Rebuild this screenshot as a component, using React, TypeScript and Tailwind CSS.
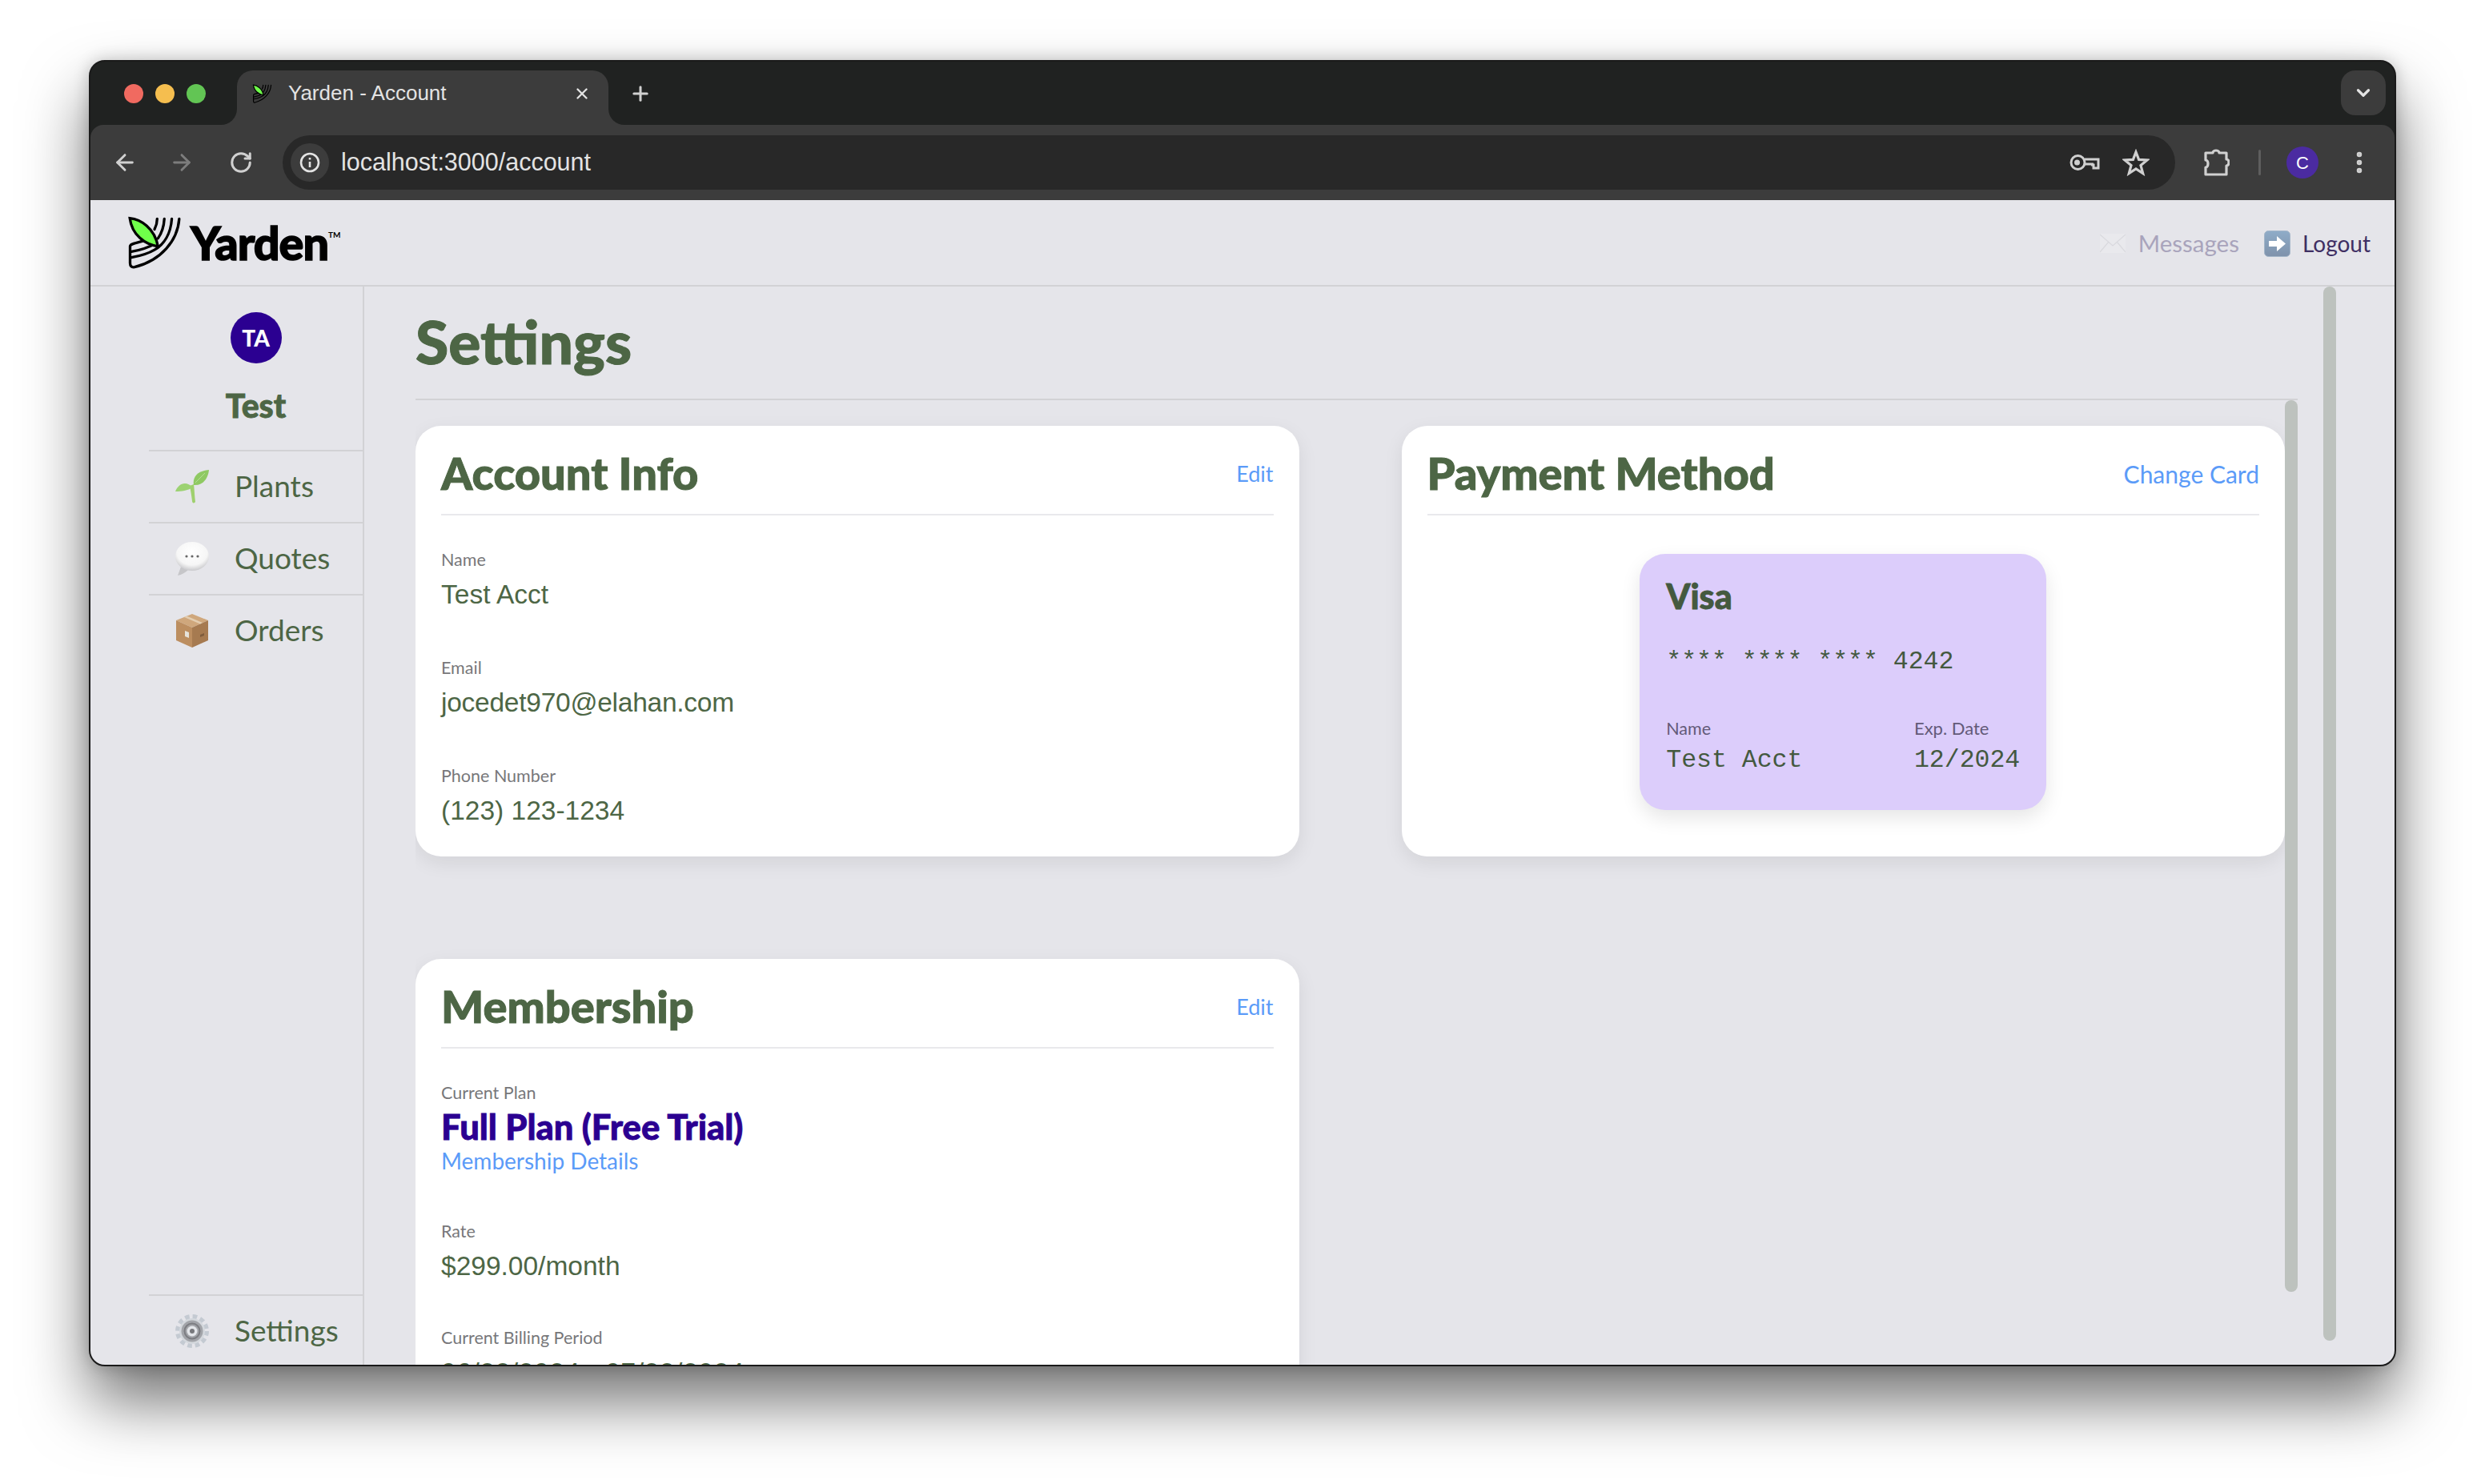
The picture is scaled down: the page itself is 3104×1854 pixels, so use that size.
import { ArrowLeft, ArrowRight, ChevronDown, EllipsisVertical, Plus, RotateCw, X } from 'lucide-react';

const YardenMark = ({ width, height }: { width: number; height: number }) => (
  <svg width={width} height={height} viewBox="20 25 210 205" fill="none" stroke="#000" strokeWidth={10} strokeLinecap="round">
    <path d="M218 38C212 120 150 195 50 220C38 222 33 216 33 205L33 142C33 130 60 130 100 116" />
    <path d="M190 38C186 95 160 135 125 155C100 170 70 178 38 184" />
    <path d="M162 38C160 70 150 95 138 112" />
    <path d="M135 38C135 52 131 66 125 78" />
    <path d="M38 162C70 156 100 148 130 130" />
    <path d="M32 36C72 40 125 72 138 142C90 135 40 100 32 36Z" fill="#6fff4a" />
  </svg>
);

const Sprout = () => (
  <svg width="44" height="42" viewBox="0 0 44 42">
    <path d="M24 18C25 26 25 33 26 40C25 42 22 42 22 39C21 31 20 25 19 20Z" fill="#9fd06e" />
    <path d="M1 27C5 17 14 13 23 22C16 26 9 27 1 27Z" fill="#9cd272" />
    <path d="M24 19C22 8 30 1 43 0C42 11 35 20 24 19Z" fill="#8fc963" />
    <path d="M26 16L38 4" stroke="#b5de96" strokeWidth="1" />
  </svg>
);

const Bubble = () => (
  <svg width="44" height="44" viewBox="0 0 44 44">
    <defs>
      <radialGradient id="bubbleFill" cx="50%" cy="35%" r="65%">
        <stop offset="0%" stopColor="#ffffff" />
        <stop offset="70%" stopColor="#f6f6f6" />
        <stop offset="100%" stopColor="#c9c9cc" />
      </radialGradient>
    </defs>
    <path d="M8 32L4 43C9 42 14 39 17 36Z" fill="#c6c6c9" />
    <ellipse cx="22" cy="19" rx="21" ry="18" fill="url(#bubbleFill)" />
    <circle cx="15" cy="19" r="1.6" fill="#666" />
    <circle cx="22" cy="19" r="1.6" fill="#666" />
    <circle cx="29" cy="19" r="1.6" fill="#666" />
  </svg>
);

const BoxIcon = () => (
  <svg width="42" height="44" viewBox="0 0 42 44">
    <path d="M21 1L41 9L21 18L1 9Z" fill="#cfa77c" />
    <path d="M1 9L21 18V43L1 34Z" fill="#bc8e60" />
    <path d="M41 9L21 18V43L41 34Z" fill="#a67a50" />
    <path d="M11 5L31 13.5L34 12L14 3.5Z" fill="#e3cdb0" />
    <path d="M12 22L17 24V31L12 29Z" fill="#e6e2da" />
    <path d="M31 27L36 25V28L31 30Z" fill="#7f5c3c" />
  </svg>
);

const GearIcon = () => (
  <svg width="42" height="42" viewBox="0 0 42 42">
    <circle cx="21" cy="21" r="18" fill="none" stroke="#c4cad2" strokeWidth="6" strokeDasharray="5.5 3.93" />
    <circle cx="21" cy="21" r="16" fill="#d4d8dd" />
    <circle cx="21" cy="21" r="13.5" fill="#a2a4a9" />
    <circle cx="21" cy="21" r="9.5" fill="none" stroke="#7c7d82" strokeWidth="2" />
    <circle cx="21" cy="21" r="6.5" fill="#e4e6ea" />
    <circle cx="21" cy="21" r="3" fill="#77787c" />
  </svg>
);

const Envelope = () => (
  <svg width="32" height="24" viewBox="0 0 32 24" fill="none">
    <rect x="0" y="0" width="32" height="24" fill="#e9e9ed" />
    <path d="M0 1L16 15L32 1M0 23L11 10M32 23L21 10" stroke="#d9d9de" strokeWidth="1.2" />
  </svg>
);

const ArrowBox = () => (
  <svg width="33" height="33" viewBox="0 0 33 33">
    <defs>
      <linearGradient id="arrowFill" x1="0" y1="0" x2="0" y2="1">
        <stop offset="0%" stopColor="#8facc8" />
        <stop offset="100%" stopColor="#7f92ab" />
      </linearGradient>
    </defs>
    <rect x="0.5" y="0.5" width="32" height="32" rx="5" fill="url(#arrowFill)" stroke="#a4b6c9" />
    <path d="M6 13H16V7L27 16.5L16 26V20H6Z" fill="#fff" />
  </svg>
);

const KeyIcon = () => (
  <svg width="38" height="22" viewBox="0 0 38 22" fill="none" stroke="#d0d0d0" strokeWidth="3">
    <circle cx="10.5" cy="11" r="8.5" />
    <circle cx="9.5" cy="11" r="3.5" fill="#d0d0d0" stroke="none" />
    <path d="M19 7H36V18H30V14H27V14M30 13H19" />
  </svg>
);

const StarIcon = () => (
  <svg width="34" height="34" viewBox="0 0 34 34" fill="none" stroke="#d0d0d0" strokeWidth="3.2" strokeLinejoin="miter">
    <path d="M17 4L20.6 13.4L31 14L23 20.6L25.7 30.6L17 25L8.3 30.6L11 20.6L3 14L13.4 13.4Z" />
  </svg>
);

const PuzzleIcon = () => (
  <svg width="32" height="34" viewBox="0 0 32 34" fill="none" stroke="#d0d0d0" strokeWidth="3.2" strokeLinejoin="round">
    <path d="M2 5H11C11 1 19 1 19 5H28V13C32 13 32 21 28 21V32H2V23C6 23 6 14 2 14Z" />
  </svg>
);

const InfoIcon = () => (
  <svg width="26" height="26" viewBox="0 0 26 26" fill="none" stroke="#e3e3e3" strokeWidth="2.6">
    <circle cx="13" cy="13" r="11" />
    <path d="M13 12V19M13 7V9.6" />
  </svg>
);

const Field = ({ label, value, className, valueClass }: { label: string; value: string; className?: string; valueClass?: string }) => (
  <div className={className}>
    <div className="h-[28px] text-[21.5px] leading-[26px] text-[#77777a]">{label}</div>
    <div className={`mt-[9px] h-[40px] font-['Liberation_Sans',sans-serif] text-[33.5px] leading-[40px] text-[#4d6645] ${valueClass ?? ''}`}>{value}</div>
  </div>
);

const CardHeader = ({ title, action, actionClass }: { title: string; action: string; actionClass: string }) => (
  <div className="flex items-center justify-between border-b-2 border-[#e9e9ec] pt-[27px] pb-[19px]">
    <h2 className="text-[56px] leading-[64px] font-black text-[#4d6645] [-webkit-text-stroke:1px_currentColor]">{title}</h2>
    <a className={`pt-[2px] text-[#5b9bf8] ${actionClass}`}>{action}</a>
  </div>
);

const NavRow = ({ icon, label }: { icon: React.ReactNode; label: string }) => (
  <div className="flex h-[90px] items-center border-t-2 border-[#d2d2d5] pl-[31px]">
    <div className="flex w-[46px] justify-center">{icon}</div>
    <span className="ml-[30px] pb-[2px] text-[37px] text-[#4d6645]">{label}</span>
  </div>
);

export default function App() {
  return (
    <div className="h-[1854px] w-[3104px] overflow-hidden bg-white pt-[75px] pl-[111px] font-['Lato',sans-serif]">
      <div className="flex h-[1632px] w-[2882px] flex-col overflow-hidden rounded-[20px] border-2 border-[#1a1a1a] bg-[#202221] shadow-[0_44px_80px_rgba(0,0,0,0.55),0_0_20px_rgba(0,0,0,0.2)]">
        {/* tab strip */}
        <div className="flex h-[79px] shrink-0 items-end">
          <div className="flex h-[68px] w-[183px] items-start gap-[15px] pt-[17px] pl-[42px]">
            <span className="h-[24px] w-[24px] rounded-full bg-[#f06a60]" />
            <span className="h-[24px] w-[24px] rounded-full bg-[#f5be4f]" />
            <span className="h-[24px] w-[24px] rounded-full bg-[#62c554]" />
          </div>
          <div className="relative flex h-[68px] w-[464px] items-start rounded-t-[20px] bg-[#3c3c3c] pt-[16px] pl-[19px]">
            <span className="absolute bottom-0 -left-[20px] h-[20px] w-[20px] bg-[#3c3c3c]">
              <span className="block h-full w-full rounded-br-[20px] bg-[#202221]" />
            </span>
            <span className="absolute -right-[20px] bottom-0 h-[20px] w-[20px] bg-[#3c3c3c]">
              <span className="block h-full w-full rounded-bl-[20px] bg-[#202221]" />
            </span>
            <YardenMark width={25} height={26} />
            <span className="ml-[20px] -mt-[2px] font-['Liberation_Sans',sans-serif] text-[26px] leading-[28px] text-[#e3e3e3]">Yarden - Account</span>
            <X className="absolute top-[18px] right-[22px] text-[#e3e3e3]" size={22} strokeWidth={2.6} />
          </div>
          <div className="flex h-[68px] flex-1 items-start pl-[26px]">
            <Plus className="mt-[15px] text-[#d0d0d0]" size={28} strokeWidth={2.6} />
            <div className="mr-[11px] ml-auto flex h-[56px] w-[56px] items-center justify-center rounded-[18px] bg-[#3c3c3c]">
              <ChevronDown className="text-[#e3e3e3]" size={26} strokeWidth={3} />
            </div>
          </div>
        </div>
        {/* toolbar */}
        <div className="flex h-[94px] shrink-0 items-center rounded-t-[16px] bg-[#3c3c3c] pl-[27px]">
          <ArrowLeft className="text-[#d0d0d0]" size={32} strokeWidth={2.2} />
          <ArrowRight className="ml-[39px] text-[#7d7d7d]" size={32} strokeWidth={2.2} />
          <RotateCw className="ml-[43px] text-[#d0d0d0]" size={30} strokeWidth={2.4} />
          <div className="ml-[37px] flex h-[68px] w-[2364px] items-center rounded-full bg-[#282828] pl-[10px]">
            <div className="flex h-[48px] w-[48px] items-center justify-center rounded-full bg-[#3c3c3c]">
              <InfoIcon />
            </div>
            <span className="ml-[15px] font-['Liberation_Sans',sans-serif] text-[30.5px] text-[#e3e3e3]">localhost:3000/account</span>
            <div className="mr-[32px] ml-auto flex items-center gap-[28px]">
              <KeyIcon />
              <StarIcon />
            </div>
          </div>
          <div className="ml-[36px]">
            <PuzzleIcon />
          </div>
          <span className="ml-[36px] h-[32px] w-[3px] rounded-full bg-[#5e5e5e]" />
          <span className="ml-[32px] flex h-[40px] w-[40px] items-center justify-center rounded-full bg-[#4b2ba1] font-['Liberation_Sans',sans-serif] text-[22px] text-white">C</span>
          <EllipsisVertical className="ml-[34px] text-[#d0d0d0]" size={34} strokeWidth={2.6} />
        </div>
        {/* page */}
        <div className="flex min-h-0 flex-1 flex-col bg-[#e5e5ea]">
          <header className="flex h-[108px] shrink-0 items-center justify-between border-b-2 border-[#d2d2d5] pr-[30px] pl-[45px]">
            <div className="flex items-center">
              <YardenMark width={70} height={68} />
              <span className="ml-[10px] text-[57.5px] leading-[68px] font-black tracking-[-1px] text-black [-webkit-text-stroke:1.5px_currentColor]">Yarden</span>
              <span className="-mt-[20px] text-[10px] font-bold text-black">TM</span>
            </div>
            <div className="flex items-center pt-[2px]">
              <Envelope />
              <span className="ml-[16px] text-[29.5px] text-[#a9a4bc]">Messages</span>
              <span className="ml-[31px]">
                <ArrowBox />
              </span>
              <span className="ml-[15px] text-[28px] text-[#3f2f63]">Logout</span>
            </div>
          </header>
          <div className="flex min-h-0 flex-1">
            <aside className="flex w-[342px] shrink-0 flex-col border-r-2 border-[#d2d2d5] pl-[73px]">
              <div className="flex flex-col items-center pt-[32px] pb-[31px]">
                <div className="flex h-[64px] w-[64px] items-center justify-center rounded-full bg-[#2b0091] text-[28px] font-black text-white">TA</div>
                <div className="mt-[29px] text-[41px] leading-[48px] font-black text-[#4d6645] [-webkit-text-stroke:0.8px_currentColor]">Test</div>
              </div>
              <NavRow icon={<Sprout />} label="Plants" />
              <NavRow icon={<Bubble />} label="Quotes" />
              <NavRow icon={<BoxIcon />} label="Orders" />
              <div className="mt-auto -mb-[2px]">
                <NavRow icon={<GearIcon />} label="Settings" />
              </div>
            </aside>
            <main className="flex min-w-0 flex-1 pr-[73px]">
              <div className="flex min-w-0 flex-1 flex-col pr-[32px] pl-[64px]">
                <div className="shrink-0 border-b-2 border-[#d2d2d5] pt-[28px] pb-[32px]">
                  <h1 className="text-[75px] leading-[80px] font-black text-[#4d6645] [-webkit-text-stroke:1px_currentColor]">Settings</h1>
                </div>
                <div className="flex min-h-0 flex-1">
                  <div className="min-w-0 flex-1 overflow-hidden pt-[32px]">
                    <div className="grid grid-cols-2 gap-[128px]">
                      <section className="rounded-[32px] bg-white px-[32px] pb-[37px] shadow-[0_8px_24px_rgba(0,0,0,0.08)]">
                        <CardHeader title="Account Info" action="Edit" actionClass="text-[27px]" />
                        <Field className="mt-[42px]" label="Name" value="Test Acct" />
                        <Field className="mt-[58px]" label="Email" value="jocedet970@elahan.com" valueClass="tracking-[-0.25px]" />
                        <Field className="mt-[58px]" label="Phone Number" value="(123) 123-1234" />
                      </section>
                      <section className="rounded-[32px] bg-white px-[32px] shadow-[0_8px_24px_rgba(0,0,0,0.08)]">
                        <CardHeader title="Payment Method" action="Change Card" actionClass="text-[30px]" />
                        <div className="mx-auto mt-[48px] h-[320px] w-[508px] rounded-[32px] bg-[#dccdfb] px-[33px] pt-[27px] shadow-[0_10px_24px_rgba(0,0,0,0.1)]">
                          <div className="text-[43px] leading-[52px] font-black text-[#44593f] [-webkit-text-stroke:0.8px_currentColor]">Visa</div>
                          <div className="mt-[36px] font-['Liberation_Mono',monospace] text-[31.5px] leading-[40px] text-[#44593f]">**** **** **** 4242</div>
                          <div className="mt-[50px] flex justify-between">
                            <div>
                              <div className="text-[21.5px] leading-[26px] text-[#635a78]">Name</div>
                              <div className="mt-[7px] font-['Liberation_Mono',monospace] text-[31.5px] leading-[40px] text-[#44593f]">Test Acct</div>
                            </div>
                            <div>
                              <div className="text-[22px] leading-[26px] text-[#635a78]">Exp. Date</div>
                              <div className="mt-[7px] font-['Liberation_Mono',monospace] text-[31.5px] leading-[40px] text-[#44593f]">12/2024</div>
                            </div>
                          </div>
                        </div>
                      </section>
                      <section className="rounded-[32px] bg-white px-[32px] pb-[37px] shadow-[0_8px_24px_rgba(0,0,0,0.08)]">
                        <CardHeader title="Membership" action="Edit" actionClass="text-[27px]" />
                        <div className="mt-[42px] h-[28px] text-[21.5px] leading-[26px] text-[#77777a]">Current Plan</div>
                        <div className="mt-[3px] text-[43.5px] leading-[48px] font-black text-[#2b0091] [-webkit-text-stroke:0.8px_currentColor]">Full Plan (Free Trial)</div>
                        <a className="mt-[1px] block text-[28px] leading-[36px] text-[#5b9bf8]">Membership Details</a>
                        <Field className="mt-[57px]" label="Rate" value="$299.00/month" />
                        <Field className="mt-[56px]" label="Current Billing Period" value="06/22/2024 - 07/22/2024" valueClass="tracking-[0.6px]" />
                      </section>
                    </div>
                  </div>
                  <div className="w-[16px] shrink-0 pb-[91px]">
                    <div className="h-full rounded-full bg-[#bdc2be]" />
                  </div>
                </div>
              </div>
              <div className="w-[16px] shrink-0 pb-[30px]">
                <div className="h-full rounded-full bg-[#bdc2be]" />
              </div>
            </main>
          </div>
        </div>
      </div>
    </div>
  );
}
